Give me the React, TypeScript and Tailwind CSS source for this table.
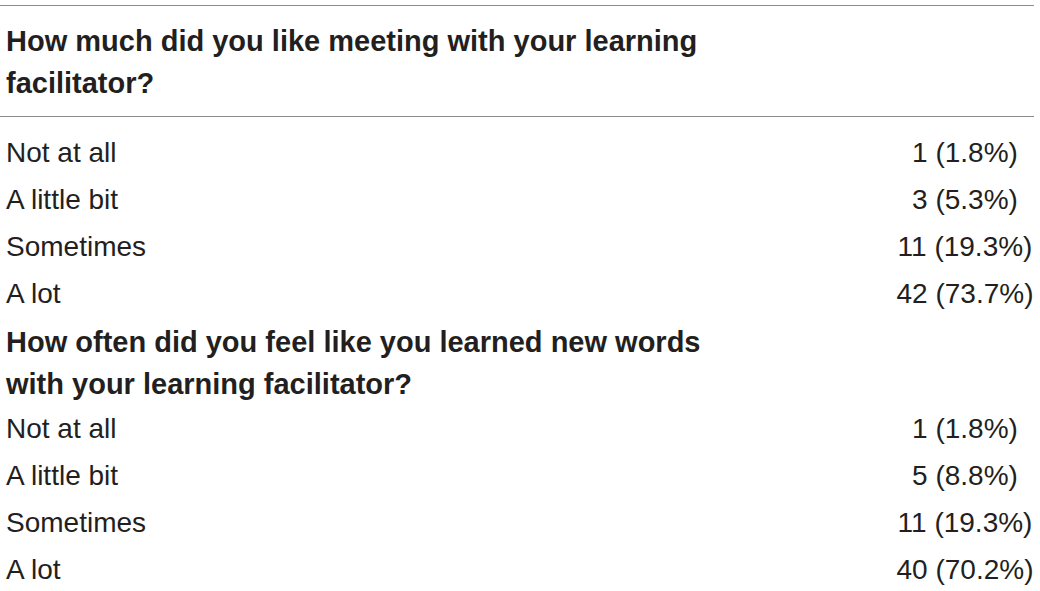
const groups = [
  {
    question: ["How much did you like meeting with your learning", "facilitator?"],
    rows: [
      { label: "Not at all", value: "1 (1.8%)" },
      { label: "A little bit", value: "3 (5.3%)" },
      { label: "Sometimes", value: "11 (19.3%)" },
      { label: "A lot", value: "42 (73.7%)" },
    ],
  },
  {
    question: ["How often did you feel like you learned new words", "with your learning facilitator?"],
    rows: [
      { label: "Not at all", value: "1 (1.8%)" },
      { label: "A little bit", value: "5 (8.8%)" },
      { label: "Sometimes", value: "11 (19.3%)" },
      { label: "A lot", value: "40 (70.2%)" },
    ],
  },
];

const Row = ({ label, value }: { label: string; value: string }) => (
  <div className="flex h-[47px] items-center justify-between leading-[47px]">
    <span className="pl-[6px]">{label}</span>
    <span className="w-[138px] text-center">{value}</span>
  </div>
);

const App = () => {
  return (
    <div
      className="h-[591px] w-[1040px] overflow-hidden bg-white pt-[5px] text-[28px] text-[#231f20]"
      style={{ fontFamily: '"Liberation Sans", Arial, sans-serif' }}
    >
      <div className="w-[1034px] border-t border-[#8c8c8c]">
        {groups.map((g, i) => (
          <div key={i}>
            <div
              className={
                i === 0
                  ? "border-b border-[#8c8c8c] pt-[14px] pb-[12px]"
                  : "pt-[4px]"
              }
            >
              <div className="pl-[6px] text-[29px] font-bold leading-[42px]">
                {g.question[0]}
                <br />
                {g.question[1]}
              </div>
            </div>
            <div className={i === 0 ? "pt-[12px]" : ""}>
              {g.rows.map((r) => (
                <Row key={r.label} label={r.label} value={r.value} />
              ))}
            </div>
          </div>
        ))}
      </div>
    </div>
  );
};

export default App;
